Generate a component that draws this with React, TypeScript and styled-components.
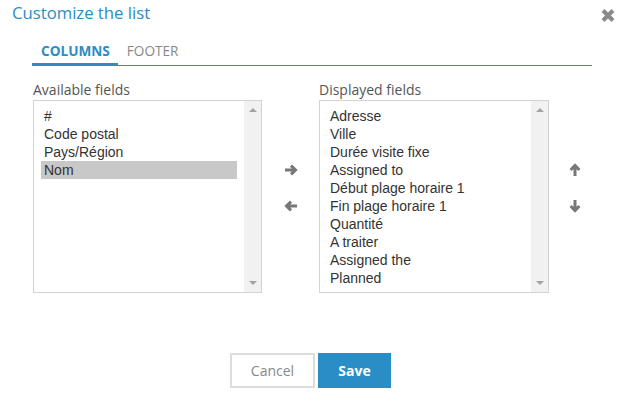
import React from "react";
import styled, { createGlobalStyle } from "styled-components";

const available = ["#", "Code postal", "Pays/Région", "Nom"];
const displayed = [
  "Adresse",
  "Ville",
  "Durée visite fixe",
  "Assigned to",
  "Début plage horaire 1",
  "Fin plage horaire 1",
  "Quantité",
  "A traiter",
  "Assigned the",
  "Planned",
];

// chunky arrow, pointing right; rotated for the other directions
const Arrow = ({ rotate = 0 }: { rotate?: number }) => (
  <svg width="14" height="14" viewBox="0 0 14 14" style={{ transform: `rotate(${rotate}deg)` }}>
    <path
      d="M1 7 H11.5 M7 2.6 L11.5 7 L7 11.4"
      fill="none"
      stroke="currentColor"
      strokeWidth="3"
      strokeLinejoin="miter"
    />
  </svg>
);

const ListBox = ({ items, selected }: { items: string[]; selected?: string }) => (
  <Box>
    <Options>
      {items.map((item) => (
        <Option key={item} $selected={item === selected}>
          {item}
        </Option>
      ))}
    </Options>
    <Scrollbar>
      <ScrollArrow $dir="up" />
      <ScrollArrow $dir="down" />
    </Scrollbar>
  </Box>
);

export default () => (
  <>
    <GlobalStyle />
    <Dialog>
      <Header>
        <Title>Customize the list</Title>
        <Close aria-label="Close">
          <svg width="16" height="15" viewBox="0 0 16 15">
            <path d="M3 2.5 L13 12.5 M13 2.5 L3 12.5" stroke="#8a8a8a" strokeWidth="4" />
          </svg>
        </Close>
      </Header>

      <TabBar>
        <Tab $active>Columns</Tab>
        <Tab>Footer</Tab>
      </TabBar>

      <Fields>
        <Column>
          <Label>Available fields</Label>
          <ListBox items={available} selected="Nom" />
        </Column>
        <Mover>
          <IconButton>
            <Arrow />
          </IconButton>
          <IconButton>
            <Arrow rotate={180} />
          </IconButton>
        </Mover>
        <Column>
          <Label>Displayed fields</Label>
          <ListBox items={displayed} />
        </Column>
        <Mover>
          <IconButton>
            <Arrow rotate={-90} />
          </IconButton>
          <IconButton>
            <Arrow rotate={90} />
          </IconButton>
        </Mover>
      </Fields>

      <Footer>
        <Button>Cancel</Button>
        <Button $primary>Save</Button>
      </Footer>
    </Dialog>
  </>
);

const GlobalStyle = createGlobalStyle`
  html, body {
    margin: 0;
    background: #ffffff;
  }
  body {
    font-family: "Open Sans", "Liberation Sans", sans-serif;
  }
`;

const Dialog = styled.div`
  width: 626px;
  height: 406px;
  box-sizing: border-box;
  padding: 2px 10px 0 12px;
  display: flex;
  flex-direction: column;
`;

const Header = styled.div`
  display: flex;
  justify-content: space-between;
  align-items: flex-start;
`;

const Title = styled.h1`
  margin: 0;
  font-size: 16.7px;
  line-height: 22px;
  font-weight: 400;
  color: #2a8dc5;
`;

const Close = styled.button`
  border: 0;
  background: none;
  padding: 0;
  margin-top: 6px;
  width: 16px;
  height: 15px;
  display: flex;
  cursor: pointer;
`;

const TabBar = styled.div`
  display: flex;
  margin: 18px 24px 0 20px;
  border-bottom: 1px solid #2a8dc5;
`;

const Tab = styled.div<{ $active?: boolean }>`
  padding: 0 8px 3px 9px;
  margin-bottom: -1px;
  font-size: 13.6px;
  line-height: 18px;
  text-transform: uppercase;
  font-weight: ${({ $active }) => ($active ? 700 : 400)};
  color: ${({ $active }) => ($active ? "#2a8dc5" : "#888888")};
  border-bottom: 3px solid ${({ $active }) => ($active ? "#2a8dc5" : "transparent")};
`;

const Fields = styled.div`
  display: grid;
  grid-template-columns: 229px 57px 230px 52px;
  margin: 15px 0 0 21px;
`;

const Column = styled.div`
  display: flex;
  flex-direction: column;
`;

const Label = styled.div`
  font-size: 14px;
  line-height: 18px;
  color: #555555;
  margin-bottom: 1px;
`;

const Box = styled.div`
  display: flex;
  height: 193px;
  box-sizing: border-box;
  border: 1px solid #d3d3d3;
`;

const Options = styled.div`
  flex: 1;
  padding: 6px 7px;
`;

const Option = styled.div<{ $selected?: boolean }>`
  padding: 0 3px;
  font-family: "Liberation Sans", Arial, sans-serif;
  font-size: 14px;
  line-height: 18px;
  color: #333333;
  background: ${({ $selected }) => ($selected ? "#c8c8c8" : "transparent")};
`;

const Scrollbar = styled.div`
  width: 17px;
  background: #f1f1f1;
  display: flex;
  flex-direction: column;
  justify-content: space-between;
  align-items: center;
  padding: 7px 0;
`;

const ScrollArrow = styled.div<{ $dir: "up" | "down" }>`
  width: 0;
  height: 0;
  border-left: 4px solid transparent;
  border-right: 4px solid transparent;
  ${({ $dir }) =>
    $dir === "up" ? "border-bottom: 4px solid #a3a3a3;" : "border-top: 4px solid #a3a3a3;"}
`;

const Mover = styled.div`
  display: flex;
  flex-direction: column;
  align-items: center;
  justify-content: center;
  gap: 22px;
  padding-top: 2px;
`;

const IconButton = styled.button`
  border: 0;
  background: none;
  padding: 0;
  height: 14px;
  display: flex;
  align-items: center;
  color: #777777;
  cursor: pointer;
`;

const Footer = styled.div`
  display: flex;
  justify-content: center;
  gap: 3px;
  margin-top: 60px;
  padding-right: 7px;
`;

const Button = styled.button<{ $primary?: boolean }>`
  height: 35px;
  width: ${({ $primary }) => ($primary ? "73px" : "85px")};
  box-sizing: border-box;
  padding: 0;
  font-family: "Open Sans", sans-serif;
  font-size: 14px;
  font-weight: ${({ $primary }) => ($primary ? 700 : 400)};
  color: ${({ $primary }) => ($primary ? "#ffffff" : "#888888")};
  background: ${({ $primary }) => ($primary ? "#2a8dc5" : "#ffffff")};
  border: 2px solid ${({ $primary }) => ($primary ? "#2a8dc5" : "#dcdcdc")};
  cursor: pointer;
`;
